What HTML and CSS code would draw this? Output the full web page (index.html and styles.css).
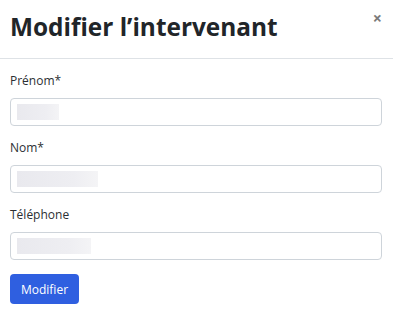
FILE: index.html
```html
<!DOCTYPE html>
<html lang="fr">
<head>
<meta charset="utf-8">
<link rel="stylesheet" href="styles.css">
</head>
<body>
<div class="modal">
  <div class="modal-header">
    <h1 class="title">Modifier l’intervenant</h1>
    <button class="close" type="button">×</button>
  </div>
  <div class="modal-body">
    <div class="group">
      <label class="label">Prénom*</label>
      <div class="input"><span class="blur" style="width:42px"></span></div>
    </div>
    <div class="group">
      <label class="label">Nom*</label>
      <div class="input"><span class="blur" style="width:81px"></span></div>
    </div>
    <div class="group">
      <label class="label">Téléphone</label>
      <div class="input"><span class="blur" style="width:74px"></span></div>
    </div>
    <button class="btn" type="button">Modifier</button>
  </div>
</div>
</body>
</html>
```
FILE: styles.css
```css
html, body {
  margin: 0;
  padding: 0;
  background: #fff;
}
body {
  font-family: "Open Sans", sans-serif;
  color: #212529;
}
.modal {
  width: 393px;
}
.modal-header {
  display: flex;
  align-items: flex-start;
  justify-content: space-between;
  height: 58px;
  border-bottom: 1px solid #dee2e6;
  padding: 0 11px 0 10px;
}
.title {
  margin: 12px 0 0 0;
  font-family: "Open Sans", sans-serif;
  font-weight: 700;
  font-size: 24.4px;
  line-height: 29px;
  color: #212529;
}
.close {
  border: 0;
  background: none;
  padding: 0;
  margin-top: 9px;
  font-size: 16px;
  line-height: 18px;
  font-weight: 700;
  color: #7a7a7a;
  font-family: "Open Sans", sans-serif;
}
.modal-body {
  padding: 13px 11px 0 10px;
}
.group {
  margin-bottom: 13px;
}
.label {
  display: block;
  font-size: 12px;
  line-height: 18px;
  margin-bottom: 8px;
  color: #2b2f33;
}
.input {
  height: 26px;
  border: 1px solid #ced4da;
  border-radius: 4px;
  display: flex;
  align-items: center;
  padding-left: 6px;
}
.blur {
  display: block;
  height: 16px;
  background: linear-gradient(90deg, #e9e9ee, #eeeef2 70%, #f4f4f6);
  filter: blur(0.6px);
}
.btn {
  margin-top: 1px;
  height: 30px;
  width: 69px;
  border: 0;
  border-radius: 4px;
  background: #2f5fe0;
  color: #fff;
  font-family: "Open Sans", sans-serif;
  font-size: 12px;
  padding: 0;
}
```
